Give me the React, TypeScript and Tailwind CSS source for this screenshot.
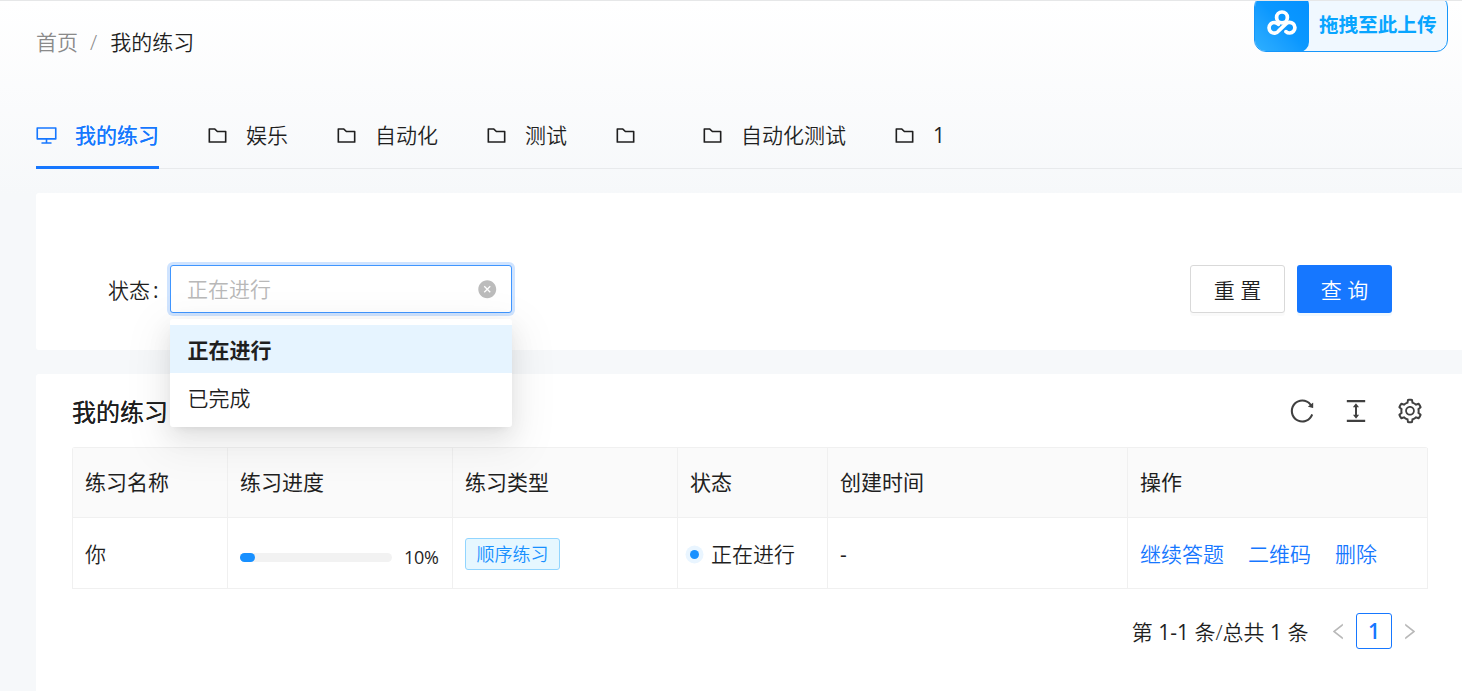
import type { ReactNode } from "react";
import {
  AiFillCloseCircle,
  AiOutlineColumnHeight,
  AiOutlineDesktop,
  AiOutlineFolder,
  AiOutlineLeft,
  AiOutlineReload,
  AiOutlineRight,
  AiOutlineSetting,
} from "react-icons/ai";

const FOLDERS = ["娱乐", "自动化", "测试", "", "自动化测试", "1"];

const COLUMNS = ["练习名称", "练习进度", "练习类型", "状态", "创建时间", "操作"];

const GRID = "grid grid-cols-[155px_225px_225px_150px_300px_300px]";

function Cell({ children }: { children: ReactNode }) {
  return (
    <div className="flex items-center border-r border-b border-[#f0f0f0] px-3 whitespace-nowrap">
      {children}
    </div>
  );
}

/** Upload drop target that floats over the top right corner. */
function UploadBadge() {
  return (
    <div className="absolute top-[-6px] right-[14px] flex h-[57px] w-[194px] overflow-hidden rounded-[12px] border border-[#1696fa] bg-[#f0f8ff]">
      <div className="-my-px -ml-px flex w-[55px] shrink-0 items-center justify-center rounded-[10px] bg-linear-to-tr from-[#2fb0ff] via-[#0b98ff] to-[#0590ff]">
        <svg width="32" height="26" viewBox="0 0 32 26" fill="none" stroke="#fff" strokeWidth="3.7" strokeLinecap="round" className="-mt-0.5">
          <circle cx="16" cy="7.4" r="5.4" />
          <path d="M12.4 14.4a5.3 5.3 0 1 0 .2 6.6L19.6 14.2a5.3 5.3 0 1 1 .4 7.4" />
        </svg>
      </div>
      <span className="pt-[13px] pl-[10px] text-[19.6px] leading-8 font-bold whitespace-nowrap text-[#08a5ff]">
        拖拽至此上传
      </span>
    </div>
  );
}

function Tabs() {
  return (
    <nav className="mt-[43px] ml-9 flex h-[67px] gap-12 border-b border-[#e8eaec]">
      <div className="-mb-px flex items-center border-b-[3px] border-[#1677ff] pt-0.5 font-normal text-[#1677ff] [text-shadow:0_0_0.4px_currentcolor]">
        <AiOutlineDesktop size={23} className="mr-[17px] -ml-px" />
        我的练习
      </div>
      {FOLDERS.map((name, i) => (
        <div key={i} className="-mb-px flex items-center border-b-[3px] border-transparent pt-0.5">
          <AiOutlineFolder size={23} className="mr-[17px] -ml-px" />
          <span className={name === "1" ? "font-normal" : undefined}>{name}</span>
        </div>
      ))}
    </nav>
  );
}

function StatusSelect() {
  return (
    <div className="relative w-[342px]">
      <div className="flex h-12 items-center justify-between rounded-[3px] border border-[#4096ff] bg-white pr-[14px] pl-[16px] text-[#b8b8b8] shadow-[0_0_0_3px_rgba(22,119,255,0.2)]">
        正在进行
        <AiFillCloseCircle size={20.5} className="text-[#bcbcbc]" />
      </div>
      <ul className="absolute top-[54px] left-0 z-10 w-full rounded-[3px] bg-white py-1.5 shadow-[0_4.5px_9px_-6px_rgba(0,0,0,0.12),0_9px_24px_0_rgba(0,0,0,0.08),0_13.5px_42px_12px_rgba(0,0,0,0.05)]">
        <li className="flex h-12 items-center bg-[#e6f4ff] px-[17.5px] pt-0.5 font-bold">正在进行</li>
        <li className="flex h-12 items-center px-[17.5px] pt-0.5">已完成</li>
      </ul>
    </div>
  );
}

function FilterCard() {
  return (
    <section className="mt-6 ml-9 flex h-[157px] items-start rounded-l-[3px] bg-white pt-[72px] pr-[70px] pl-[72px]">
      <div className="flex h-12 w-[62px] items-center pt-0.5 whitespace-nowrap">
        状态<span className="ml-[3px] font-normal">:</span>
      </div>
      <StatusSelect />
      <div className="ml-auto flex gap-3">
        <button className="h-12 w-[95px] rounded-[3px] border border-[#d9d9d9] bg-white pt-0.5 shadow-[0_3px_0_rgba(0,0,0,0.02)]">
          重 置
        </button>
        <button className="h-12 w-[95px] rounded-[3px] bg-[#1677ff] pt-0.5 text-white shadow-[0_3px_0_rgba(5,145,255,0.06)]">
          查 询
        </button>
      </div>
    </section>
  );
}

function PracticeTable() {
  return (
    <div className="w-[1356px] rounded-t-[3px] border-t border-l border-[#f0f0f0]">
      <div className={`${GRID} h-[70px] bg-[#fafafa] font-normal`}>
        {COLUMNS.map((c) => (
          <Cell key={c}>{c}</Cell>
        ))}
      </div>
      <div className={`${GRID} h-[71px]`}>
        <Cell>
          <span className="pt-0.5">你</span>
        </Cell>
        <Cell>
          <div className="mt-2 flex items-center">
            <div className="h-[9px] w-[152px] rounded-full bg-[#f2f2f2]">
              <div className="h-full w-[10%] rounded-full bg-[#1890ff]" />
            </div>
            <span className="-mt-px ml-3 text-[18px] leading-6 font-normal tracking-[-0.3px]">10%</span>
          </div>
        </Cell>
        <Cell>
          <span className="mt-0.5 flex h-8 w-[95px] items-center justify-center rounded-[3px] border border-[#91d5ff] bg-[#e6f7ff] text-[18px] text-[#1890ff]">
            顺序练习
          </span>
        </Cell>
        <Cell>
          <span className="mt-0.5 mr-3 h-[9px] w-[9px] rounded-full bg-[#1890ff] shadow-[0_0_0_4.5px_#e9f5ff]" />
          <span className="pt-0.5">正在进行</span>
        </Cell>
        <Cell>
          <span className="pt-0.5 font-normal">-</span>
        </Cell>
        <Cell>
          <div className="flex gap-6 pt-0.5 text-[#1677ff]">
            <a>继续答题</a>
            <a>二维码</a>
            <a>删除</a>
          </div>
        </Cell>
      </div>
    </div>
  );
}

function Pagination() {
  return (
    <div className="mt-6 flex h-9 items-center justify-end pr-[8px]">
      <span className="mr-[19.5px] pt-0.5 whitespace-nowrap">
        第 <span className="font-normal">1-1</span> 条/总共 <span className="font-normal">1</span> 条
      </span>
      <AiOutlineLeft size={21} className="text-[#b8b8b8]" />
      <span className="mx-[7px] flex h-9 w-9 items-center justify-center rounded-[3px] border border-[#1677ff] pt-px font-semibold text-[#1677ff]">
        1
      </span>
      <AiOutlineRight size={21} className="text-[#b8b8b8]" />
    </div>
  );
}

export default function App() {
  return (
    <div className="relative h-[691px] w-[1462px] overflow-hidden border-t border-[#e6e7e8] bg-[#f6f8fa] bg-[linear-gradient(#ffffff,#f6f8fa_28%)] font-['Open_Sans','Noto_Sans_CJK_SC',sans-serif] text-[21px] leading-[33px] font-[350] text-[#1f1f1f]">
      <div className="ml-9 flex pt-[25px] text-[#8a8a8a]">
        首页
        <span className="mx-3">/</span>
        <span className="pl-px text-[#1f1f1f]">我的练习</span>
      </div>
      <Tabs />
      <FilterCard />
      <section className="mt-6 ml-9 h-[330px] rounded-l-[3px] bg-white pr-[34px] pl-9">
        <div className="flex h-[73px] items-center justify-between pr-1">
          <h2 className="pt-0.5 text-[24px] font-normal [text-shadow:0_0_0.4px_currentcolor]">我的练习</h2>
          <div className="flex gap-[26px] text-[#404040]">
            <AiOutlineReload size={28} />
            <AiOutlineColumnHeight size={28} />
            <AiOutlineSetting size={28} />
          </div>
        </div>
        <PracticeTable />
        <Pagination />
      </section>
      <UploadBadge />
    </div>
  );
}
